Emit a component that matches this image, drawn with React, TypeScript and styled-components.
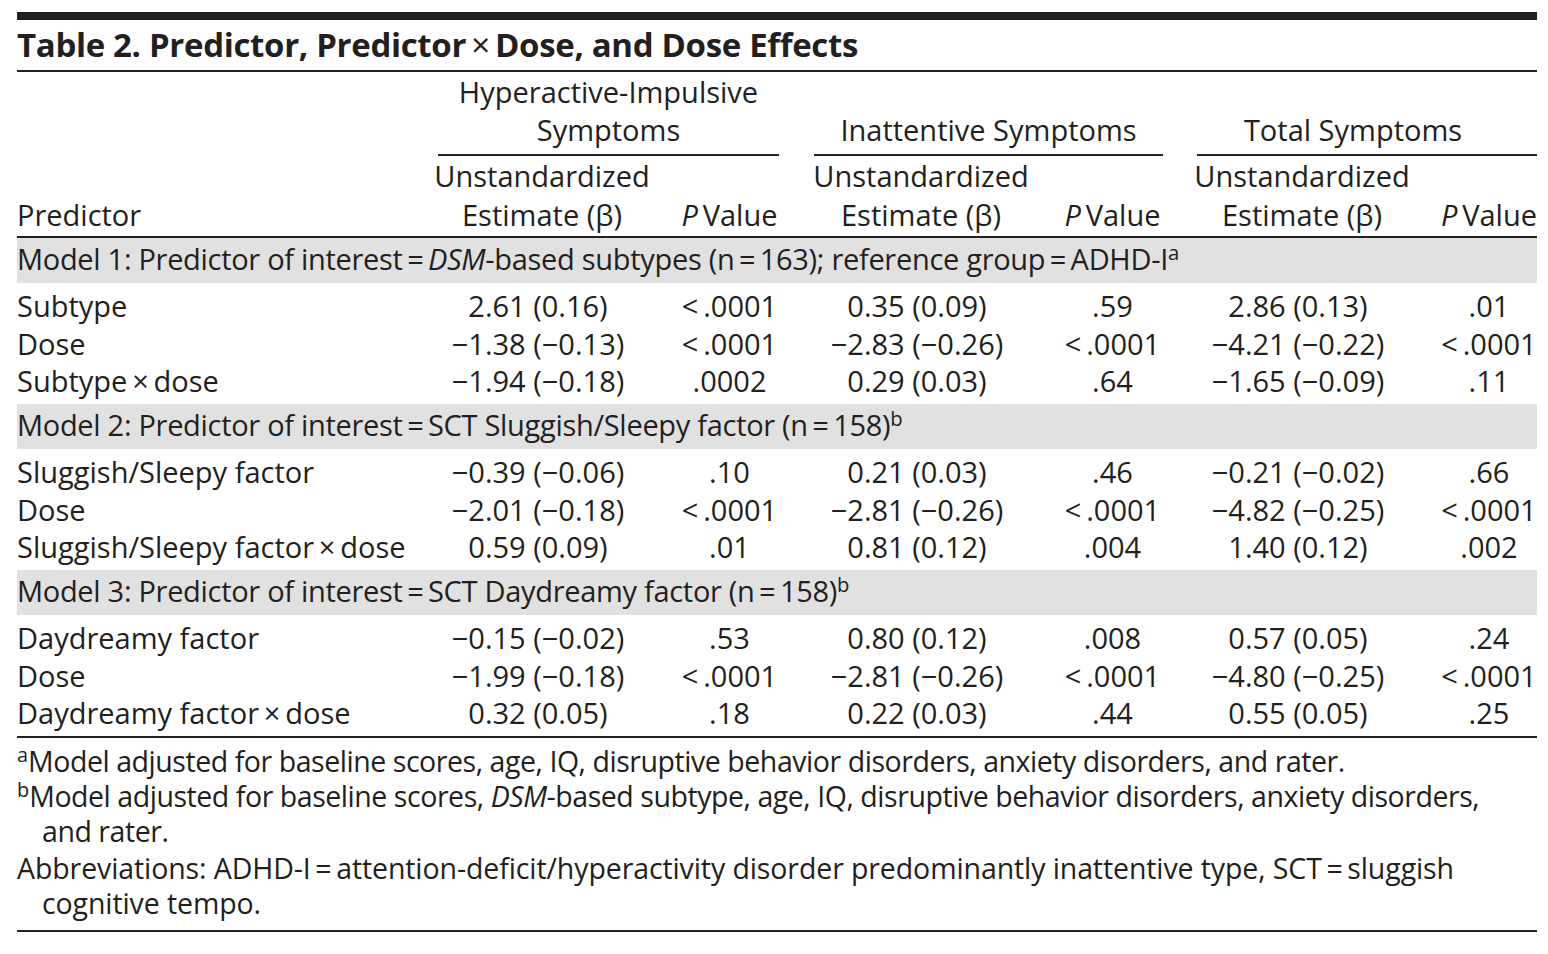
import React from "react";
import styled, { createGlobalStyle } from "styled-components";

const INK = "#231f20";
const COLS = "421px 208px 133px 35px 214px 135px 34px 210px 130px";
const T = "\u2009";
const M = "\u2212";

const GlobalStyle = createGlobalStyle`
  html, body {
    margin: 0;
    padding: 0;
    background: #ffffff;
  }
  body {
    font-family: "Open Sans", "Noto Sans", sans-serif;
    color: ${INK};
    font-size: 29px;
  }
`;

const Page = styled.div`
  width: 1520px;
  padding: 12px 0 0 17px;
`;

const TopRule = styled.div`
  height: 8px;
  background: ${INK};
`;

const Title = styled.div`
  font-weight: 700;
  font-size: 33px;
  line-height: 50px;
  height: 50px;
  white-space: nowrap;
  border-bottom: 2px solid ${INK};
  letter-spacing: -0.33px;
`;

const Times = styled.span`
  font-weight: 400;
`;

const Head = styled.div`
  display: grid;
  grid-template-columns: ${COLS};
  border-bottom: 2px solid ${INK};
`;

const GroupHead = styled.div<{ $col: number; $shift?: number }>`
  grid-column: ${({ $col }) => `${$col} / span 2`};
  grid-row: 1;
  display: flex;
  flex-direction: column;
  justify-content: flex-end;
  align-items: center;
  padding: 1px ${({ $shift }) => $shift ?? 0}px 5px 0;
  line-height: 38px;
  border-bottom: 2px solid ${INK};
  white-space: nowrap;
`;

const PredictorHead = styled.div`
  grid-column: 1;
  grid-row: 1 / span 2;
  align-self: end;
  line-height: 39px;
  padding-bottom: 2px;
`;

const SubHead = styled.div<{ $col: number; $p?: boolean }>`
  grid-column: ${({ $col }) => $col};
  grid-row: 2;
  display: flex;
  flex-direction: column;
  justify-content: flex-end;
  align-items: center;
  line-height: 39px;
  padding: 0 0 2px ${({ $p }) => ($p ? 34 : 0)}px;
  white-space: nowrap;
`;

const Band = styled.div`
  background: #e1e1e1;
  height: 45px;
  box-sizing: border-box;
  padding-top: 2px;
  line-height: 38px;
  white-space: nowrap;
  letter-spacing: -0.3px;
`;

const RowGroup = styled.div`
  padding: 4px 0 4.5px;
`;

const Row = styled.div`
  display: grid;
  grid-template-columns: ${COLS};
  height: 37.5px;
  line-height: 37.5px;
`;

const Label = styled.div`
  grid-column: 1;
  white-space: nowrap;
`;

const Est = styled.div<{ $col: number }>`
  grid-column: ${({ $col }) => $col};
  display: flex;
  justify-content: center;
  white-space: nowrap;
  padding-right: 8px;
`;

const PVal = styled.div<{ $col: number }>`
  grid-column: ${({ $col }) => $col};
  display: flex;
  justify-content: center;
  padding-left: 34px;
  white-space: nowrap;
`;

const Notes = styled.div`
  padding: 6px 0 9px;
  border-top: 2px solid ${INK};
  border-bottom: 2px solid ${INK};
  font-size: 28.5px;
  line-height: 35px;
  letter-spacing: -0.45px;
`;

const Note = styled.div<{ $gap?: number; $spacing?: number }>`
  padding-left: 25px;
  text-indent: -25px;
  white-space: nowrap;
  margin-top: ${({ $gap }) => $gap ?? 0}px;
  ${({ $spacing }) => ($spacing !== undefined ? `letter-spacing: ${$spacing}px;` : "")}
`;

const Sup = styled.sup`
  font-size: 0.7em;
  line-height: 0;
  vertical-align: 0.5em;
  letter-spacing: 0;
`;

const Ital = styled.i`
  font-style: italic;
`;

type DataRow = [string, string, string, string, string, string, string];

type Model = {
  title: React.ReactNode;
  rows: DataRow[];
};

const models: Model[] = [
  {
    title: (
      <>
        Model 1: Predictor of interest{T}={T}<Ital>DSM</Ital>-based subtypes (n{T}={T}163); reference group{T}={T}ADHD-I
        <Sup>a</Sup>
      </>
    ),
    rows: [
      ["Subtype", "2.61 (0.16)", `<${T}.0001`, "0.35 (0.09)", ".59", "2.86 (0.13)", ".01"],
      ["Dose", `${M}1.38 (${M}0.13)`, `<${T}.0001`, `${M}2.83 (${M}0.26)`, `<${T}.0001`, `${M}4.21 (${M}0.22)`, `<${T}.0001`],
      [`Subtype${T}×${T}dose`, `${M}1.94 (${M}0.18)`, ".0002", "0.29 (0.03)", ".64", `${M}1.65 (${M}0.09)`, ".11"],
    ],
  },
  {
    title: (
      <>
        Model 2: Predictor of interest{T}={T}SCT Sluggish/Sleepy factor (n{T}={T}158)<Sup>b</Sup>
      </>
    ),
    rows: [
      ["Sluggish/Sleepy factor", `${M}0.39 (${M}0.06)`, ".10", "0.21 (0.03)", ".46", `${M}0.21 (${M}0.02)`, ".66"],
      ["Dose", `${M}2.01 (${M}0.18)`, `<${T}.0001`, `${M}2.81 (${M}0.26)`, `<${T}.0001`, `${M}4.82 (${M}0.25)`, `<${T}.0001`],
      [`Sluggish/Sleepy factor${T}×${T}dose`, "0.59 (0.09)", ".01", "0.81 (0.12)", ".004", "1.40 (0.12)", ".002"],
    ],
  },
  {
    title: (
      <>
        Model 3: Predictor of interest{T}={T}SCT Daydreamy factor (n{T}={T}158)<Sup>b</Sup>
      </>
    ),
    rows: [
      ["Daydreamy factor", `${M}0.15 (${M}0.02)`, ".53", "0.80 (0.12)", ".008", "0.57 (0.05)", ".24"],
      ["Dose", `${M}1.99 (${M}0.18)`, `<${T}.0001`, `${M}2.81 (${M}0.26)`, `<${T}.0001`, `${M}4.80 (${M}0.25)`, `<${T}.0001`],
      [`Daydreamy factor${T}×${T}dose`, "0.32 (0.05)", ".18", "0.22 (0.03)", ".44", "0.55 (0.05)", ".25"],
    ],
  },
];

const PValueHead = () => (
  <span>
    <Ital>P</Ital>
    {"\u2009Value"}
  </span>
);

export default function App() {
  return (
    <Page>
      <GlobalStyle />
      <TopRule />
      <Title>
        Table 2. Predictor, Predictor{T}
        <Times>×</Times>
        {T}Dose, and Dose Effects
      </Title>

      <Head>
        <PredictorHead>Predictor</PredictorHead>
        <GroupHead $col={2}>
          <span>Hyperactive-Impulsive</span>
          <span>Symptoms</span>
        </GroupHead>
        <GroupHead $col={5}>
          <span>Inattentive Symptoms</span>
        </GroupHead>
        <GroupHead $col={8} $shift={28}>
          <span>Total Symptoms</span>
        </GroupHead>
        {[2, 5, 8].map((c) => (
          <React.Fragment key={c}>
            <SubHead $col={c}>
              <span>Unstandardized</span>
              <span>Estimate (β)</span>
            </SubHead>
            <SubHead $col={c + 1} $p>
              <PValueHead />
            </SubHead>
          </React.Fragment>
        ))}
      </Head>

      {models.map((m, i) => (
        <React.Fragment key={i}>
          <Band>{m.title}</Band>
          <RowGroup>
            {m.rows.map((r, j) => (
              <Row key={j}>
                <Label>{r[0]}</Label>
                <Est $col={2}>{r[1]}</Est>
                <PVal $col={3}>{r[2]}</PVal>
                <Est $col={5}>{r[3]}</Est>
                <PVal $col={6}>{r[4]}</PVal>
                <Est $col={8}>{r[5]}</Est>
                <PVal $col={9}>{r[6]}</PVal>
              </Row>
            ))}
          </RowGroup>
        </React.Fragment>
      ))}

      <Notes>
        <Note>
          <Sup>a</Sup>Model adjusted for baseline scores, age, IQ, disruptive behavior disorders, anxiety disorders, and rater.
        </Note>
        <Note>
          <Sup>b</Sup>Model adjusted for baseline scores, <Ital>DSM</Ital>-based subtype, age, IQ, disruptive behavior disorders, anxiety disorders,
          <br />
          and rater.
        </Note>
        <Note $gap={2} $spacing={-0.1}>
          Abbreviations: ADHD-I{T}={T}attention-deficit/hyperactivity disorder predominantly inattentive type, SCT{T}={T}sluggish
          <br />
          cognitive tempo.
        </Note>
      </Notes>
    </Page>
  );
}
